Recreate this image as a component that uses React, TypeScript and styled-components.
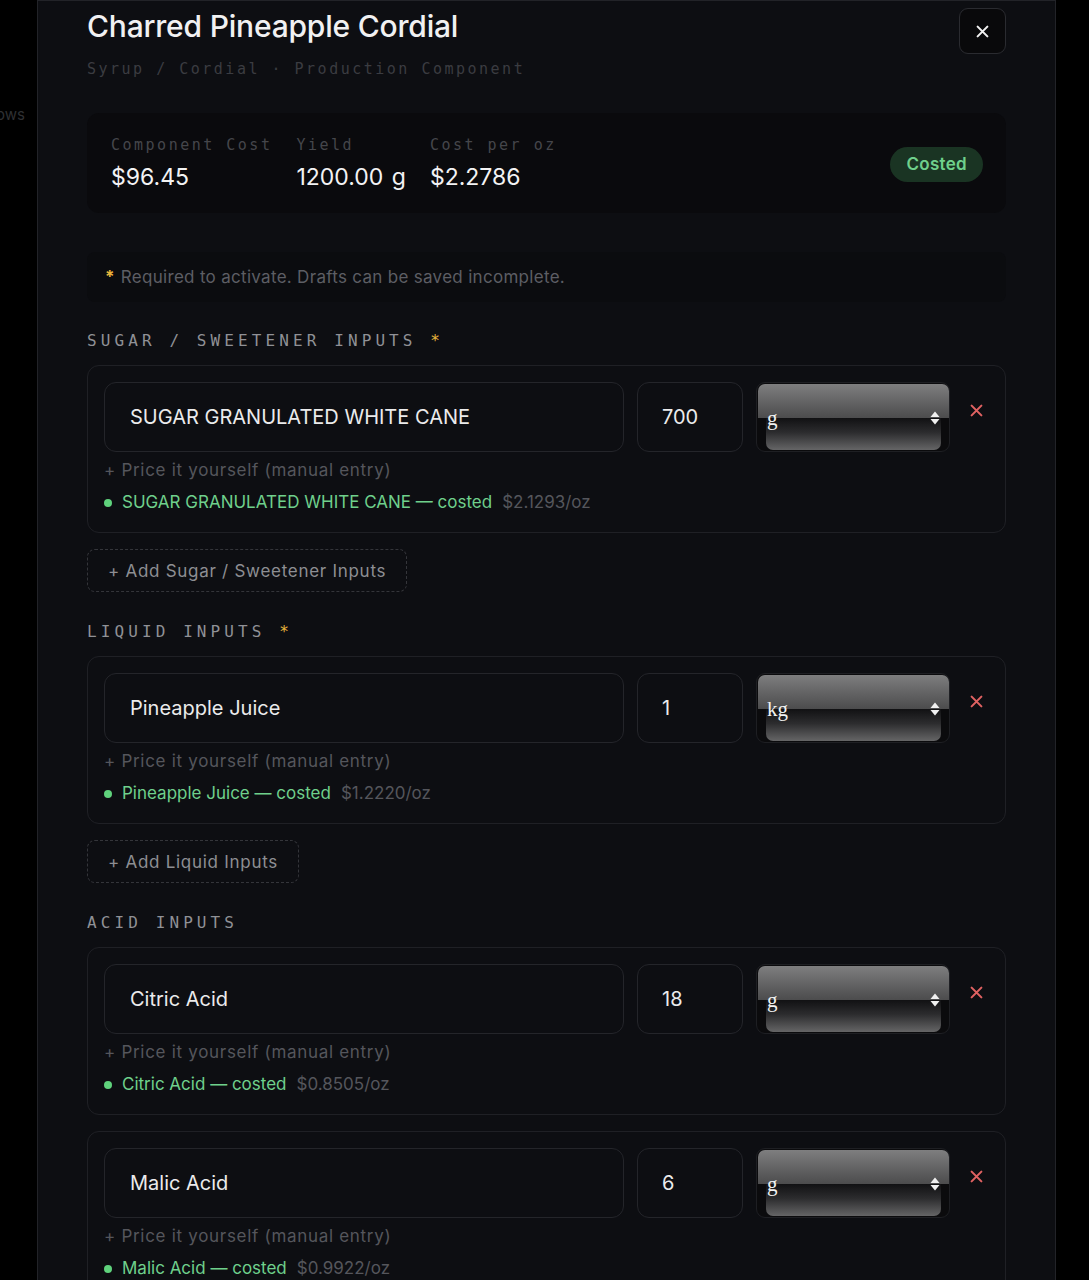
import styled, { createGlobalStyle } from 'styled-components'

const GlobalStyle = createGlobalStyle`
	html, body {
		margin: 0;
		padding: 0;
		background: #000;
		overflow: hidden;
	}
	* {
		box-sizing: border-box;
	}
`;

const UI_FONT = `Inter, "Noto Sans", sans-serif`;
const MONO_FONT = `"DejaVu Sans Mono", "Liberation Mono", monospace`;

const Page = styled.div`
	display: flex;
	height: 1280px;
	overflow: hidden;
	background: #000;
	font-family: ${UI_FONT};
`;

const Gutter = styled.div`
	width: 37px;
	flex-shrink: 0;
	overflow: hidden;
	display: flex;
	justify-content: flex-end;
	padding-top: 105px;
	padding-right: 12px;
	color: #2f3033;
	font-size: 15px;
	white-space: nowrap;
`;

const Panel = styled.section`
	width: 1019px;
	flex-shrink: 0;
	background: #0d0e12;
	border: 1px solid #222328;
	border-bottom: none;
	padding: 6px 49px 0 49px;
	display: flex;
	flex-direction: column;

	& > * {
		flex-shrink: 0;
	}
`;

const Header = styled.header`
	display: flex;
	justify-content: space-between;
	align-items: flex-start;
`;

const Title = styled.h1`
	margin: 0;
	font-size: 30px;
	line-height: 38px;
	font-weight: 500;
	color: #f1f1f2;
	letter-spacing: -0.2px;
`;

const Subtitle = styled.div`
	margin-top: 14px;
	font-family: ${MONO_FONT};
	font-size: 15px;
	line-height: 20px;
	letter-spacing: 2.5px;
	color: #3b3c41;
`;

const CloseButton = styled.button`
	width: 47px;
	height: 46px;
	border-radius: 9px;
	border: 1px solid #2a2b30;
	background: #09090b;
	display: flex;
	align-items: center;
	justify-content: center;
	padding: 0;
	margin-top: 1px;
	cursor: pointer;
`;

const CostCard = styled.div`
	margin-top: 34px;
	height: 100px;
	border-radius: 12px;
	background: #0a0a0d;
	padding: 0 23px 0 24px;
	display: flex;
	align-items: center;
	justify-content: space-between;
`;

const Stats = styled.div`
	display: flex;
	gap: 24px;
`;

const Stat = styled.div`
	display: flex;
	flex-direction: column;
	gap: 8px;
`;

const StatLabel = styled.div`
	font-family: ${MONO_FONT};
	font-size: 15px;
	line-height: 20px;
	letter-spacing: 2.5px;
	color: #45464b;
	white-space: nowrap;
`;

const StatValue = styled.div`
	font-size: 23px;
	line-height: 28px;
	color: #f3f3f4;
	white-space: nowrap;
	word-spacing: 2px;
`;

const Badge = styled.span`
	height: 35px;
	padding: 0 16px;
	border-radius: 18px;
	background: #1a3423;
	color: #6fd08c;
	font-size: 17px;
	font-weight: 600;
	letter-spacing: 0.3px;
	display: flex;
	align-items: center;
	margin-top: 2px;
`;

const Note = styled.div`
	margin-top: 39px;
	height: 50px;
	border-radius: 8px;
	background: #0b0c0f;
	padding: 0 18px;
	display: flex;
	align-items: center;
	font-size: 17px;
	letter-spacing: 0.3px;
	color: #5d5e64;
`;

const Star = styled.span`
	color: #e8b53c;
	font-weight: 700;
	margin-right: 6px;
`;

const SectionTitle = styled.h2`
	margin: 0;
	font-family: ${MONO_FONT};
	font-weight: 400;
	font-size: 16px;
	line-height: 20px;
	letter-spacing: 4.1px;
	color: #909196;
	white-space: pre;
`;

const SectionStar = styled.span`
	color: #e8b53c;
`;

const Section = styled.div<{ $first?: boolean }>`
	display: flex;
	flex-direction: column;
	margin-top: ${(p) => (p.$first ? '29px' : '30px')};

	& > * {
		flex-shrink: 0;
	}
`;

const ItemCard = styled.div`
	margin-top: 14px;
	border: 1px solid #1f2025;
	border-radius: 12px;
	padding: 16px 16px 18px;
	display: flex;
	flex-direction: column;

	& + & {
		margin-top: 16px;
	}
`;

const ItemRow = styled.div`
	display: grid;
	grid-template-columns: 1fr 106px 194px 26px;
	gap: 13px;
	margin-bottom: 6px;
`;

const TextField = styled.input<{ $pad?: number }>`
	height: 70px;
	border: 1px solid #24252a;
	border-radius: 12px;
	background: #0d0e12;
	color: #ebebec;
	font-family: ${UI_FONT};
	font-size: 20px;
	padding: 0 0 0 ${(p) => p.$pad ?? 25}px;
	outline: none;
	min-width: 0;
`;

const UnitSelect = styled.div`
	height: 70px;
	border: 1px solid #1e1f23;
	border-radius: 9px;
	background: #0b0b0d;
	padding: 1px 0 1px 1px;
	display: grid;
`;

const Glass = styled.div`
	grid-area: 1 / 1;
	display: flex;
	flex-direction: column;
`;

const GlassTop = styled.div`
	height: 34px;
	border-radius: 7px 7px 0 0;
	background: linear-gradient(#7e7e7f, #626263 55%, #4c4c4d);
`;

const GlassBottom = styled.div`
	flex: 1;
	margin: 0 8px;
	border-radius: 0 0 7px 7px;
	background: linear-gradient(#111113, #2c2c2e 45%, #656566);
`;

const UnitLabel = styled.div`
	grid-area: 1 / 1;
	display: flex;
	align-items: center;
	justify-content: space-between;
	padding: 2px 9px 0 9px;
	font-family: "Liberation Serif", "DejaVu Serif", serif;
	font-size: 21px;
	color: #f2f2f2;
`;

const RemoveButton = styled.button`
	height: 24px;
	margin-top: 16px;
	padding: 0;
	border: none;
	background: none;
	display: flex;
	align-items: center;
	justify-content: center;
	cursor: pointer;
`;

const ManualLink = styled.div`
	font-size: 17px;
	line-height: 24px;
	letter-spacing: 0.7px;
	color: #55565c;
`;

const Status = styled.div`
	margin-top: 8px;
	display: flex;
	align-items: center;
	font-size: 17px;
	line-height: 24px;
	white-space: nowrap;
`;

const Dot = styled.span`
	width: 8px;
	height: 8px;
	border-radius: 50%;
	background: #5fd27c;
	margin: 2px 10px 0 0;
`;

const StatusText = styled.span`
	color: #6fd08c;
`;

const StatusPrice = styled.span`
	color: #55565c;
	margin-left: 10px;
`;

const AddButton = styled.button`
	align-self: flex-start;
	margin-top: 16px;
	height: 43px;
	padding: 0 20px;
	border: 1px dashed #34353a;
	border-radius: 8px;
	background: transparent;
	color: #8d8e93;
	font-family: ${UI_FONT};
	font-size: 17px;
	letter-spacing: 0.72px;
	cursor: pointer;
`;

type Item = {
	name: string
	qty: string
	unit: string
	price: string
}

type SectionData = {
	title: string
	required: boolean
	addLabel?: string
	items: Item[]
}

const sections: SectionData[] = [
	{
		title: 'SUGAR / SWEETENER INPUTS',
		required: true,
		addLabel: '+ Add Sugar / Sweetener Inputs',
		items: [{ name: 'SUGAR GRANULATED WHITE CANE', qty: '700', unit: 'g', price: '$2.1293/oz' }],
	},
	{
		title: 'LIQUID INPUTS',
		required: true,
		addLabel: '+ Add Liquid Inputs',
		items: [{ name: 'Pineapple Juice', qty: '1', unit: 'kg', price: '$1.2220/oz' }],
	},
	{
		title: 'ACID INPUTS',
		required: false,
		items: [
			{ name: 'Citric Acid', qty: '18', unit: 'g', price: '$0.8505/oz' },
			{ name: 'Malic Acid', qty: '6', unit: 'g', price: '$0.9922/oz' },
		],
	},
];

function CrossIcon({ color, size }: { color: string; size: number }) {
	return (
		<svg width={size} height={size} viewBox="0 0 12 12" fill="none">
			<path d="M1.5 1.5l9 9M10.5 1.5l-9 9" stroke={color} strokeWidth="1.9" strokeLinecap="round" />
		</svg>
	);
}

function SelectArrows() {
	return (
		<svg width="10" height="16" viewBox="0 0 10 16">
			<path d="M5 1.5L9.5 7H0.5z" fill="#f0f0f0" />
			<path d="M5 14.5L9.5 9H0.5z" fill="#f0f0f0" />
		</svg>
	);
}

function IngredientCard({ item }: { item: Item }) {
	return (
		<ItemCard>
			<ItemRow>
				<TextField readOnly value={item.name} />
				<TextField readOnly value={item.qty} $pad={24} />
				<UnitSelect>
					<Glass>
						<GlassTop />
						<GlassBottom />
					</Glass>
					<UnitLabel>
						<span>{item.unit}</span>
						<SelectArrows />
					</UnitLabel>
				</UnitSelect>
				<RemoveButton type="button" aria-label="Remove">
					<CrossIcon color="#e06262" size={13} />
				</RemoveButton>
			</ItemRow>
			<ManualLink>+ Price it yourself (manual entry)</ManualLink>
			<Status>
				<Dot />
				<StatusText>{item.name} — costed</StatusText>
				<StatusPrice>{item.price}</StatusPrice>
			</Status>
		</ItemCard>
	);
}

export default function App() {
	return (
		<>
			<GlobalStyle />
			<Page>
				<Gutter>Rows</Gutter>
				<Panel>
					<Header>
						<div>
							<Title>Charred Pineapple Cordial</Title>
							<Subtitle>Syrup / Cordial · Production Component</Subtitle>
						</div>
						<CloseButton type="button" aria-label="Close">
							<CrossIcon color="#f2f2f2" size={13} />
						</CloseButton>
					</Header>

					<CostCard>
						<Stats>
							<Stat>
								<StatLabel>Component Cost</StatLabel>
								<StatValue>$96.45</StatValue>
							</Stat>
							<Stat>
								<StatLabel>Yield</StatLabel>
								<StatValue>1200.00 g</StatValue>
							</Stat>
							<Stat>
								<StatLabel>Cost per oz</StatLabel>
								<StatValue>$2.2786</StatValue>
							</Stat>
						</Stats>
						<Badge>Costed</Badge>
					</CostCard>

					<Note>
						<Star>*</Star>Required to activate. Drafts can be saved incomplete.
					</Note>

					{sections.map((section, i) => (
						<Section key={section.title} $first={i === 0}>
							<SectionTitle>
								{section.title}
								{section.required && (
									<>
										{' '}
										<SectionStar>*</SectionStar>
									</>
								)}
							</SectionTitle>
							{section.items.map((item) => (
								<IngredientCard key={item.name} item={item} />
							))}
							{section.addLabel && <AddButton type="button">{section.addLabel}</AddButton>}
						</Section>
					))}
				</Panel>
			</Page>
		</>
	);
}
